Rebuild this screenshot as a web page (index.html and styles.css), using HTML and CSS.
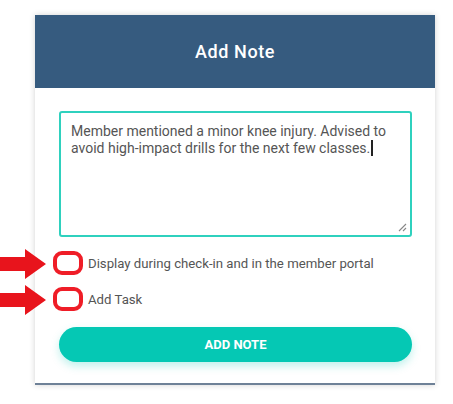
FILE: index.html
```html
<!DOCTYPE html>
<html lang="en">
<head>
  <meta charset="UTF-8">
  <meta name="viewport" content="width=device-width, initial-scale=1.0">
  <title>Add Note</title>
  <link rel="stylesheet" href="styles.css">
</head>
<body>
  <div class="modal">
    <div class="modal-header">
      <h1>Add Note</h1>
    </div>
    <div class="modal-body">
      <div class="note-box">
        <p>Member mentioned a minor knee injury. Advised to avoid high-impact drills for the next few classes.<span class="caret"></span></p>
        <svg class="grip" width="9" height="9" viewBox="0 0 9 9">
          <path d="M1 8 L8 1 M5 8 L8 5" stroke="#888" stroke-width="1.1" fill="none"/>
        </svg>
      </div>
      <label class="check-row">
        <span class="check"></span>
        <span>Display during check-in and in the member portal</span>
      </label>
      <label class="check-row">
        <span class="check"></span>
        <span>Add Task</span>
      </label>
      <button type="button" class="add-button">ADD NOTE</button>
    </div>
  </div>

  <!-- pointers to the two options -->
  <svg class="pointer pointer-one" width="50" height="30" viewBox="0 0 50 30">
    <polygon points="0,8 25,8 25,0 46,15 25,30 25,22 0,22" fill="#e8141c"/>
  </svg>
  <svg class="pointer pointer-two" width="50" height="30" viewBox="0 0 50 30">
    <polygon points="0,8 25,8 25,0 46,15 25,30 25,22 0,22" fill="#e8141c"/>
  </svg>
</body>
</html>
```

FILE: styles.css
```css
body {
  margin: 0;
  padding: 15px 0 0 35px;
  background: #fff;
  font-family: Roboto, Arial, sans-serif;
  position: relative;
  height: 404px;
  box-sizing: border-box;
  overflow: hidden;
}

.modal {
  width: 400px;
  background: #fff;
  box-shadow: 0 0 6px rgba(0, 0, 0, 0.18);
  border-bottom: 2px solid #6e8197;
}

.modal-header {
  height: 73px;
  background-color: #365b7f;
  display: flex;
  align-items: center;
  justify-content: center;
}

.modal-header h1 {
  margin: 0;
  color: #fff;
  font-size: 18px;
  font-weight: 500;
  letter-spacing: 0.6px;
}

.modal-body {
  padding: 23px 23px 21px 24px;
}

.note-box {
  position: relative;
  height: 126px;
  border: 2px solid #2fd1be;
  border-radius: 3px;
  box-sizing: border-box;
  padding: 10px 10px;
}

.note-box p {
  margin: 0;
  font-size: 14px;
  line-height: 16.5px;
  color: #555;
}

.caret {
  display: inline-block;
  width: 2px;
  height: 16px;
  background: #222;
  vertical-align: -3px;
  margin-left: 1px;
}

.grip {
  position: absolute;
  right: 3px;
  bottom: 3px;
}

.check-row {
  display: flex;
  align-items: center;
  gap: 5px;
  margin-left: -6px;
  font-size: 13.2px;
  color: #555;
  height: 24px;
}

.check-row:first-of-type {
  margin-top: 14px;
}

.check-row + .check-row {
  margin-top: 12px;
}

.check {
  flex-shrink: 0;
  width: 22px;
  height: 16px;
  border: 4px solid #ef1d27;
  border-radius: 9px;
  background: #fff;
}

.add-button {
  display: block;
  width: 100%;
  height: 35px;
  margin-top: 16px;
  border: none;
  border-radius: 18px;
  background-color: #05c8b4;
  box-shadow: 0 4px 8px rgba(5, 200, 180, 0.25);
  color: #fff;
  font-family: Roboto, Arial, sans-serif;
  font-size: 13px;
  font-weight: 700;
  cursor: pointer;
}

.pointer {
  position: absolute;
  left: 0;
}

.pointer-one {
  top: 249px;
}

.pointer-two {
  top: 285px;
}
```
